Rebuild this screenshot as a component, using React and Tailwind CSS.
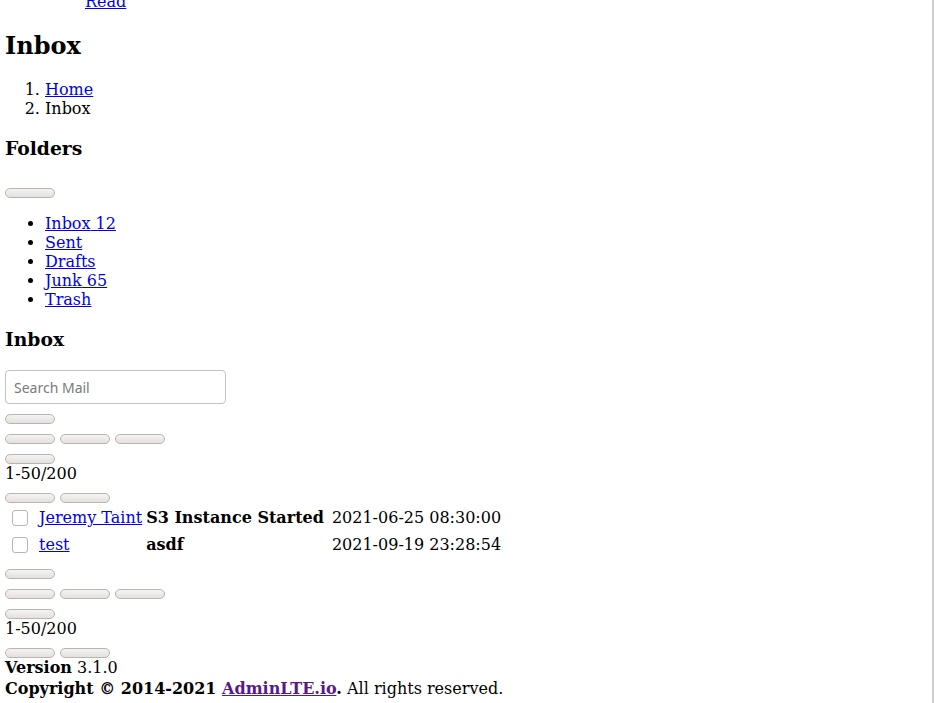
import React from 'react'

const folders = [
  { name: 'Inbox', count: 12 },
  { name: 'Sent' },
  { name: 'Drafts' },
  { name: 'Junk', count: 65 },
  { name: 'Trash' },
]

const mails = [
  { from: 'Jeremy Taint', subject: 'S3 Instance Started', date: '2021-06-25 08:30:00' },
  { from: 'test', subject: 'asdf', date: '2021-09-19 23:28:54' },
]

function Btn() {
  return (
    <button
      type="button"
      className="inline-block w-[50px] h-[10px] rounded-[5px] border border-[#b9b4ae] bg-linear-to-b from-[#f5f4f3] to-[#e4e1de] align-top"
    />
  )
}

function BtnRow({ count, className = '' }) {
  return (
    <div className={`flex gap-[5px] h-[10px] ${className}`}>
      {Array.from({ length: count }).map((_, i) => (
        <Btn key={i} />
      ))}
    </div>
  )
}

function Link({ children, className = '' }) {
  return <a href="#" className={`text-[#0000ee] underline ${className}`}>{children}</a>
}

function MailControls() {
  return (
    <>
      <BtnRow count={1} className="mt-[10px]" />
      <BtnRow count={3} className="mt-[10px]" />
      <BtnRow count={1} className="mt-[10px]" />
      <div>1-50/200</div>
      <BtnRow count={2} className="mt-[10px]" />
    </>
  )
}

export default function App() {
  return (
    <div className="min-h-screen bg-white text-black text-[16px] leading-[19px] font-['DejaVu_Serif','Liberation_Serif',serif]">
      <div className="px-[5px] -mt-[8px]">
        <ul className="pl-[80px]">
          <li><Link>Read</Link></li>
        </ul>

        <h1 className="mt-[21px] mb-[20px] text-[24px] leading-[28px] font-bold">Inbox</h1>
        <ol className="list-decimal pl-[40px]">
          <li><Link>Home</Link></li>
          <li>Inbox</li>
        </ol>

        <h3 className="mt-[19px] text-[18.72px] leading-[22px] font-bold">Folders</h3>
        <BtnRow count={1} className="mt-[29px]" />
        <ul className="list-disc pl-[40px] mt-[16px]">
          {folders.map(f => (
            <li key={f.name}>
              <Link>{f.name}{f.count ? ` ${f.count}` : ''}</Link>
            </li>
          ))}
        </ul>

        <h3 className="mt-[19px] text-[18.72px] leading-[22px] font-bold">Inbox</h3>
        <input
          type="text"
          placeholder="Search Mail"
          className="block mt-[20px] w-[221px] h-[34px] rounded-[4px] border border-[#c6c2bd] px-[8px] text-[14px] font-['Noto_Sans',sans-serif] placeholder:text-[#7a7a7a] outline-none"
        />

        <MailControls />

        <table className="border-separate border-spacing-[2px]">
          <tbody>
            {mails.map(m => (
              <tr key={m.from} className="h-[25px]">
                <td className="w-[29px] pl-[5px] align-middle">
                  <span className="block w-[16px] h-[16px] rounded-[3px] border border-[#bab5af] bg-white" />
                </td>
                <td className="p-px whitespace-nowrap"><Link>{m.from}</Link></td>
                <td className="p-px whitespace-nowrap font-bold">{m.subject}</td>
                <td className="p-px" />
                <td className="p-px whitespace-nowrap">{m.date}</td>
              </tr>
            ))}
          </tbody>
        </table>

        <MailControls />

        <div><strong>Version</strong> 3.1.0</div>
        <div className="mt-[2px]">
          <strong>
            Copyright © 2014-2021 <a href="#" className="text-[#551a8b] underline">AdminLTE.io</a>.
          </strong>{' '}
          All rights reserved.
        </div>
      </div>
      <div className="fixed top-0 right-0 h-full w-[2px] bg-[#cfcfcf]" />
    </div>
  )
}
